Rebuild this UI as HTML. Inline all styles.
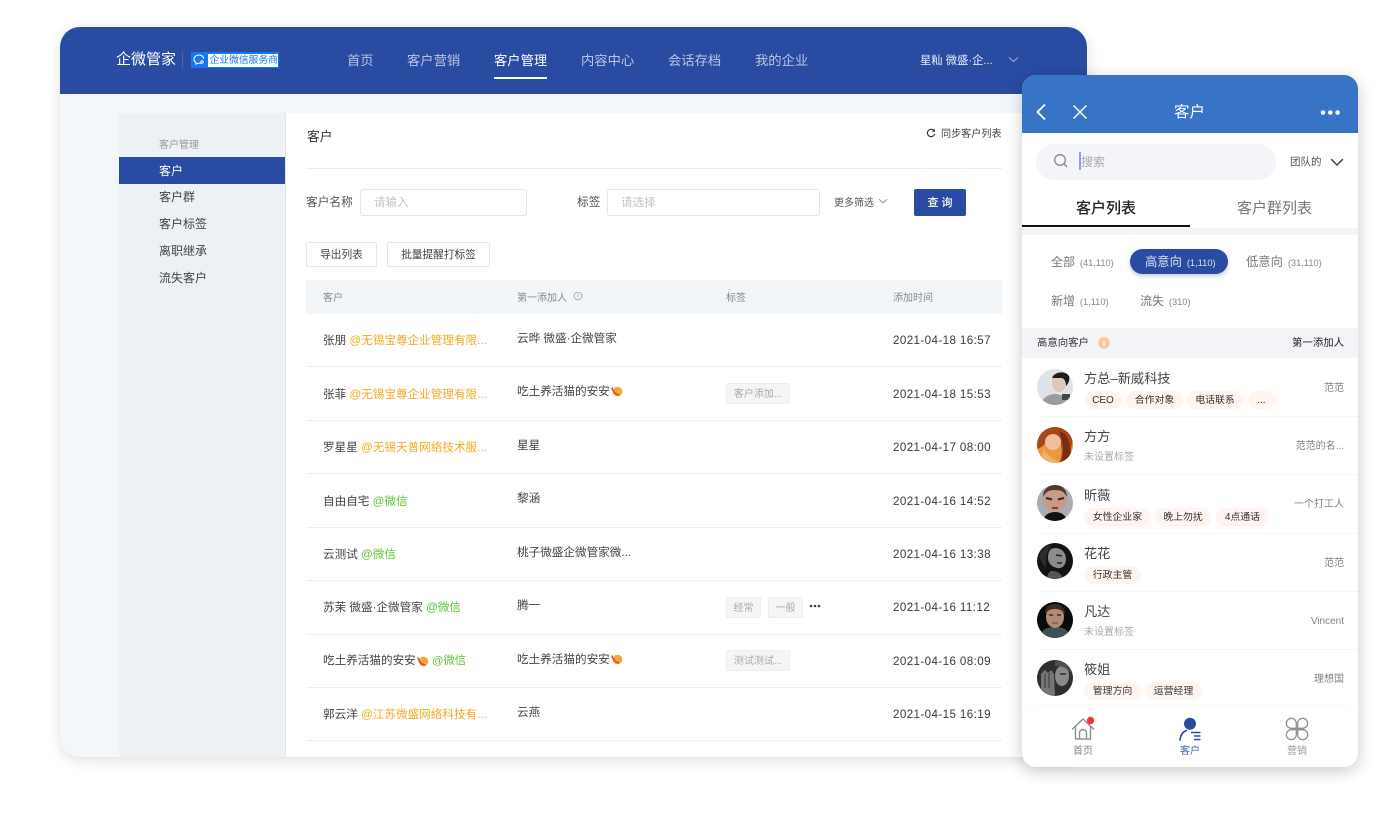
<!DOCTYPE html>
<html lang="zh"><head><meta charset="utf-8"><title>企微管家</title>
<style>
html,body{margin:0;padding:0;background:#fff}
body{width:1400px;height:816px;position:relative;overflow:hidden;font-family:"Liberation Sans","Noto Sans CJK SC",sans-serif;color:#333;-webkit-font-smoothing:antialiased}
.a,.t,.tag,.ptag,svg.a{position:absolute}
.t{white-space:nowrap;line-height:20px;height:20px}
.card{position:absolute;left:60px;top:27px;width:1027px;height:730px;background:#f4f7fa;border-radius:20px;overflow:hidden;box-shadow:0 3px 14px rgba(0,0,0,.13)}
.phone{position:absolute;left:1022px;top:75px;width:336px;height:692px;background:#fff;border-radius:14px;overflow:hidden;box-shadow:0 4px 16px rgba(0,0,0,.22)}
.shell{position:absolute;left:0;top:0;width:1400px;height:816px}
.line{position:absolute;left:306px;width:696px;height:1px;background:#ebeef3}
.name{left:323px;font-size:11.6px;color:#444}
.o{color:#f8a823}.g{color:#5fc437}
.first{left:517px;font-size:11.6px;color:#444}
.date{left:893px;font-size:11.6px;letter-spacing:.4px;color:#3a3a3a}
.tag{height:19px;line-height:21px;background:#f5f5f5;border:1px solid #ededed;border-radius:2px;font-size:10px;color:#aaa;text-align:center;box-sizing:content-box}
.input{position:absolute;height:25px;border:1px solid #e3e6ec;border-radius:3px;background:#fff}
.btn{position:absolute;height:23px;line-height:25px;border:1px solid #e3e6ec;border-radius:2px;background:#fff;font-size:10.7px;color:#444;text-align:center}
.ptag{height:17.5px;line-height:20px;background:#fff5f0;border-radius:9px;font-size:9.9px;color:#333;text-align:center}
.av{position:absolute;left:15px;width:36px;height:36px;border-radius:50%;overflow:hidden}
.sep{position:absolute;left:15px;right:0;height:1px;background:#f6f6f7}
.pn{left:62px;font-size:13.2px;color:#444}
.pr{right:14px;font-size:10px;color:#808080}
.ps{left:62px;font-size:10px;color:#aaa}
.side{left:159px;font-size:12px;color:#444}
.nav{font-size:13.3px;color:#b9c5e2}
.sm{font-size:10px;color:#888}
.n{font-size:9.3px;margin-left:1.5px;color:#888}
</style></head><body>
<div class="card"></div>
<div class="shell" style="clip-path:inset(27px 313px 59px 60px round 20px)">
<!-- header -->
<div class="a" style="left:60px;top:27px;width:1027px;height:67px;background:#2a4ba2"></div>
<div class="t" style="left:116px;top:50px;font-size:15px;color:#fff">企微管家</div>
<div class="a" style="left:182px;top:52px;width:1px;height:16px;background:#4c68b0"></div>
<div class="a" style="left:191px;top:52px;width:88px;height:16px;background:#1677f0"></div>
<div class="a" style="left:208px;top:54px;width:70px;height:13px;background:#fff"></div>
<svg class="a" style="left:192px;top:53px" width="15" height="14" viewBox="0 0 15 14"><path d="M7 2C4 2 2 4 2 6.3c0 1.4.8 2.500 2 3.300L4 11l1.800-.8c.8.200 2 .200 3 0" fill="none" stroke="#fff" stroke-width="1.100"/><circle cx="10" cy="9" r="1.200" fill="none" stroke="#fff"/><path d="M7 2c2.500 0 4.500 1.600 4.800 3.700" fill="none" stroke="#fff" stroke-width="1.100"/></svg>
<div class="t" style="left:209.500px;top:51px;font-size:9.800px;color:#1677f0">企业微信服务商</div>
<div class="t nav" style="left:347px;top:51px">首页</div>
<div class="t nav" style="left:407px;top:51px">客户营销</div>
<div class="t nav" style="left:494px;top:51px;color:#fff">客户管理</div>
<div class="a" style="left:494px;top:77px;width:53px;height:1.500px;background:#fff"></div>
<div class="t nav" style="left:581px;top:51px">内容中心</div>
<div class="t nav" style="left:668px;top:51px">会话存档</div>
<div class="t nav" style="left:755px;top:51px">我的企业</div>
<div class="t" style="left:920px;top:51px;font-size:11.300px;color:#e9edf6">星籼 微盛·企...</div>
<svg class="a" style="left:1008px;top:56px" width="11" height="8" viewBox="0 0 11 8"><path d="M1 1.500l4.500 4 4.500-4" fill="none" stroke="#a9b7da" stroke-width="1"/></svg>
<!-- sidebar -->
<div class="a" style="left:119px;top:113px;width:166px;height:644px;background:#edf0f4"></div>
<div class="a" style="left:285px;top:113px;width:1px;height:644px;background:#dfe3ea"></div>
<div class="a" style="left:286px;top:113px;width:760px;height:644px;background:#fff"></div>
<div class="t" style="left:159px;top:135.500px;font-size:10px;color:#999">客户管理</div>
<div class="a" style="left:119px;top:157px;width:166px;height:27px;background:#2a4ba2"></div>
<div class="t side" style="top:161px;color:#fff">客户</div>
<div class="t side" style="top:187px">客户群</div>
<div class="t side" style="top:214px">客户标签</div>
<div class="t side" style="top:241px">离职继承</div>
<div class="t side" style="top:268px">流失客户</div>
<!-- main top -->
<div class="t" style="left:307px;top:127px;font-size:12.800px;color:#333">客户</div>
<svg class="a" style="left:926px;top:128px" width="10" height="10" viewBox="0 0 10 10"><path d="M8.300 3A3.700 3.700 0 1 0 8.700 6" fill="none" stroke="#333" stroke-width="1.100"/><path d="M9 .8v3H6z" fill="#333"/></svg>
<div class="t" style="left:941px;top:124.500px;font-size:10.100px;color:#444">同步客户列表</div>
<div class="a" style="left:306px;top:168px;width:696px;height:1px;background:#e9ecf2"></div>
<div class="t" style="left:306px;top:193px;font-size:11.700px;color:#555">客户名称</div>
<div class="input" style="left:360px;top:189px;width:165px"></div>
<div class="t" style="left:374px;top:193px;font-size:11.500px;color:#c0c3cb">请输入</div>
<div class="t" style="left:577px;top:193px;font-size:11.700px;color:#555">标签</div>
<div class="input" style="left:607px;top:189px;width:211px"></div>
<div class="t" style="left:621px;top:193px;font-size:11.500px;color:#c0c3cb">请选择</div>
<div class="t" style="left:834px;top:193.500px;font-size:10px;color:#555">更多筛选</div>
<svg class="a" style="left:878px;top:198px" width="10" height="7" viewBox="0 0 10 7"><path d="M1 1.200l4 3.600 4-3.600" fill="none" stroke="#999" stroke-width="1"/></svg>
<div class="a" style="left:914px;top:189px;width:52px;height:27px;line-height:29px;background:#2a4ba2;border-radius:2px;color:#fff;font-size:11px;text-align:center;font-weight:500">查 询</div>
<div class="btn" style="left:306px;top:242px;width:69px">导出列表</div>
<div class="btn" style="left:387px;top:242px;width:101px">批量提醒打标签</div>
<!-- table -->
<div class="a" style="left:306px;top:280px;width:696px;height:34px;background:#f3f6f9"></div>
<div class="t sm" style="left:323px;top:288.500px">客户</div>
<div class="t sm" style="left:517px;top:288.500px">第一添加人</div>
<svg class="a" style="left:573px;top:291px" width="10" height="10" viewBox="0 0 10 10"><circle cx="5" cy="5" r="3.900" fill="none" stroke="#999" stroke-width=".8"/><path d="M5 2.700v3M5 6.500v.8" stroke="#999" stroke-width=".8"/></svg>
<div class="t sm" style="left:726px;top:288.500px">标签</div>
<div class="t sm" style="left:893px;top:288.500px">添加时间</div>
<div class="line" style="top:366px"></div><div class="line" style="top:420px"></div><div class="line" style="top:473px"></div><div class="line" style="top:527px"></div><div class="line" style="top:580px"></div><div class="line" style="top:634px"></div><div class="line" style="top:687px"></div><div class="line" style="top:740px"></div>

<div class="t name" style="top:331px">张朋 <span class="o">@无锡宝尊企业管理有限...</span></div>
<div class="t first" style="top:329px">云晔 微盛·企微管家</div>
<div class="t date" style="top:331px">2021-04-18 16:57</div>

<div class="t name" style="top:385px">张菲 <span class="o">@无锡宝尊企业管理有限...</span></div>
<div class="t first" style="top:382px">吃土养活猫的安安</div>
<svg class="a" style="left:611px;top:386px" width="12" height="11" viewBox="0 0 12 11"><circle cx="6.500" cy="5.500" r="4.800" fill="#f5a33b"/><path d="M1 1.500C2 6 4 8.500 8 9" fill="none" stroke="#e8492f" stroke-width="1.600"/></svg>
<div class="tag" style="left:726px;top:383px;width:62px">客户添加...</div>
<div class="t date" style="top:385px">2021-04-18 15:53</div>

<div class="t name" style="top:438px">罗星星 <span class="o">@无锡天普网络技术服...</span></div>
<div class="t first" style="top:436px">星星</div>
<div class="t date" style="top:438px">2021-04-17 08:00</div>

<div class="t name" style="top:492px">自由自宅 <span class="g">@微信</span></div>
<div class="t first" style="top:489px">黎涵</div>
<div class="t date" style="top:492px">2021-04-16 14:52</div>

<div class="t name" style="top:545px">云测试 <span class="g">@微信</span></div>
<div class="t first" style="top:543px">桃子微盛企微管家微...</div>
<div class="t date" style="top:545px">2021-04-16 13:38</div>

<div class="t name" style="top:598px">苏茉 微盛·企微管家 <span class="g">@微信</span></div>
<div class="t first" style="top:596px">腾一</div>
<div class="tag" style="left:726px;top:597px;width:33px">经常</div>
<div class="tag" style="left:768px;top:597px;width:33px">一般</div>
<svg class="a" style="left:809px;top:604px" width="12" height="4" viewBox="0 0 12 4"><circle cx="2" cy="2" r="1.300" fill="#444"/><circle cx="6" cy="2" r="1.300" fill="#444"/><circle cx="10" cy="2" r="1.300" fill="#444"/></svg>
<div class="t date" style="top:598px">2021-04-16 11:12</div>

<div class="t name" style="top:651px">吃土养活猫的安安</div>
<svg class="a" style="left:417px;top:656px" width="12" height="11" viewBox="0 0 12 11"><circle cx="6.500" cy="5.500" r="4.800" fill="#f5a33b"/><path d="M1 1.500C2 6 4 8.500 8 9" fill="none" stroke="#e8492f" stroke-width="1.600"/></svg>
<div class="t name" style="left:432px;top:651px"><span class="g" style="font-size:11.300px">@微信</span></div>
<div class="t first" style="top:650px">吃土养活猫的安安</div>
<svg class="a" style="left:611px;top:654px" width="12" height="11" viewBox="0 0 12 11"><circle cx="6.500" cy="5.500" r="4.800" fill="#f5a33b"/><path d="M1 1.500C2 6 4 8.500 8 9" fill="none" stroke="#e8492f" stroke-width="1.600"/></svg>
<div class="tag" style="left:726px;top:650px;width:62px">测试测试...</div>
<div class="t date" style="top:652px">2021-04-16 08:09</div>

<div class="t name" style="top:705px">郭云洋 <span class="o">@江苏微盛网络科技有...</span></div>
<div class="t first" style="top:703px">云燕</div>
<div class="t date" style="top:705px">2021-04-15 16:19</div>
</div>

<!-- phone -->
<div class="phone">
<div class="a" style="left:0;top:0;width:336px;height:58px;background:#3874c6"></div>
<svg class="a" style="left:13px;top:27px" width="14" height="20" viewBox="0 0 14 20"><path d="M10 2.500L2.500 10l7.500 7.500" fill="none" stroke="#fff" stroke-width="1.800"/></svg>
<svg class="a" style="left:50px;top:29px" width="16" height="16" viewBox="0 0 16 16"><path d="M1.500 1.500l13 13M14.500 1.500l-13 13" fill="none" stroke="#fff" stroke-width="1.500"/></svg>
<div class="t" style="left:152px;top:28px;font-size:15.500px;color:#fff">客户</div>
<svg class="a" style="left:298px;top:33.500px" width="21" height="7" viewBox="0 0 21 7"><circle cx="3" cy="3.500" r="2.300" fill="#fff"/><circle cx="10.300" cy="3.500" r="2.300" fill="#fff"/><circle cx="17.600" cy="3.500" r="2.300" fill="#fff"/></svg>
<div class="a" style="left:14px;top:69px;width:240px;height:36px;background:#f3f5f9;border-radius:18px"></div>
<svg class="a" style="left:31px;top:78px" width="16" height="16" viewBox="0 0 16 16"><circle cx="7" cy="7" r="5.300" fill="none" stroke="#888" stroke-width="1.300"/><path d="M11 11l3 3" stroke="#888" stroke-width="1.300"/></svg>
<div class="a" style="left:57px;top:77px;width:1.500px;height:18px;background:#8ca3d8"></div>
<div class="t" style="left:59px;top:76.500px;font-size:12px;color:#aaa">搜索</div>
<div class="t" style="left:268px;top:77px;font-size:10.500px;color:#555">团队的</div>
<svg class="a" style="left:307.500px;top:82.500px" width="14" height="9" viewBox="0 0 14 9"><path d="M1.200 1.200L7 7l5.800-5.800" fill="none" stroke="#444" stroke-width="1.500"/></svg>
<div class="t" style="left:54px;top:124px;font-size:15px;color:#222;font-weight:500">客户列表</div>
<div class="t" style="left:215px;top:124px;font-size:15px;color:#777">客户群列表</div>
<div class="a" style="left:0;top:150px;width:168px;height:1.500px;background:#111"></div>
<div class="a" style="left:0;top:153px;width:336px;height:7px;background:#f3f4f8"></div>

<div class="t" style="left:29px;top:177px;font-size:12px;color:#777">全部 <span class="n">(41,110)</span></div>
<div class="a" style="left:108px;top:174px;width:98px;height:25px;background:#2a4ba2;border-radius:13px;box-shadow:0 2px 5px rgba(42,75,162,.3)"></div>
<div class="t" style="left:123px;top:177px;font-size:12.300px;color:#d8e0f2">高意向 <span class="n" style="color:#d8e0f2">(1,110)</span></div>
<div class="t" style="left:224px;top:177px;font-size:12.300px;color:#777">低意向 <span class="n">(31,110)</span></div>
<div class="t" style="left:29px;top:216px;font-size:12px;color:#777">新增 <span class="n">(1,110)</span></div>
<div class="t" style="left:118px;top:216px;font-size:12px;color:#777">流失 <span class="n">(310)</span></div>

<div class="a" style="left:0;top:253px;width:336px;height:30px;background:#f3f4f8"></div>
<div class="t" style="left:15px;top:259px;font-size:10.400px;color:#333">高意向客户</div>
<svg class="a" style="left:76px;top:262px" width="12" height="12" viewBox="0 0 12 12"><circle cx="6" cy="6" r="5.800" fill="#f8c8a0"/><path d="M6 3v.9M6 5v4" stroke="#fff" stroke-width="1.200"/></svg>
<div class="t" style="right:14px;top:259px;font-size:10.400px;color:#222">第一添加人</div>

<!-- rows -->
<div class="av" style="top:294px"><svg width="36" height="36" viewBox="0 0 36 36"><rect width="36" height="36" fill="#dfe2e6"/><path d="M4 36c1-8 9-11 14-11s12 3 14 11z" fill="#9b9c9e"/><ellipse cx="22" cy="14" rx="7" ry="9" fill="#e2c7b8"/><path d="M15 9c2-6 13-8 17-2 1 3 0 7-3 10 0-5-2-8-5-8-4 0-6 0-9 0z" fill="#1d1c1e"/><rect x="25" y="25" width="8" height="6" fill="#44464a"/></svg></div>
<div class="t pn" style="top:294px">方总–新威科技</div>
<div class="ptag" style="left:62px;top:316px;width:38px;font-size:10px">CEO</div>
<div class="ptag" style="left:104px;top:316px;width:57px">合作对象</div>
<div class="ptag" style="left:165px;top:316px;width:56px">电话联系</div>
<div class="ptag" style="left:226px;top:316px;width:27px">...</div>
<div class="t pr" style="top:304px">范范</div>
<div class="sep" style="top:341px"></div>

<div class="av" style="top:352px"><svg width="36" height="36" viewBox="0 0 36 36"><rect width="36" height="36" fill="#e89a3c"/><path d="M0 0h36v14c-4 10 0 22-6 22H22C28 24 24 8 14 9 10 12 8 20 0 22z" fill="#a8481a"/><ellipse cx="16" cy="15" rx="8" ry="8" fill="#f0bfa0"/><path d="M22 4c8 2 14 12 10 32h-8c4-10 2-22-2-32z" fill="#7a2d10"/><path d="M6 22c4 6 10 10 16 14H4z" fill="#efb070"/></svg></div>
<div class="t pn" style="top:352px">方方</div>
<div class="t ps" style="top:372.500px">未设置标签</div>
<div class="t pr" style="top:362px">范范的名...</div>
<div class="sep" style="top:399px"></div>

<div class="av" style="top:410px"><svg width="36" height="36" viewBox="0 0 36 36"><rect width="36" height="36" fill="#a5adb5"/><ellipse cx="18" cy="13" rx="12" ry="14" fill="#c99a85"/><path d="M6 12c0-8 6-12 12-12s12 4 12 12c-3-5-5-7-12-7S9 7 6 12z" fill="#4a3a32"/><path d="M9 13l6 1.500M21 14.500l6-1.500" stroke="#2a2a30" stroke-width="2"/><path d="M15 23h6" stroke="#7b4038" stroke-width="2"/><path d="M6 36c1-6 6-9 12-9s11 3 12 9z" fill="#111"/></svg></div>
<div class="t pn" style="top:411px">昕薇</div>
<div class="ptag" style="left:62px;top:433px;width:67px">女性企业家</div>
<div class="ptag" style="left:133px;top:433px;width:56px">晚上勿扰</div>
<div class="ptag" style="left:194px;top:433px;width:53px">4点通话</div>
<div class="t pr" style="top:420px">一个打工人</div>
<div class="sep" style="top:458px"></div>

<div class="av" style="top:468px"><svg width="36" height="36" viewBox="0 0 36 36"><rect width="36" height="36" fill="#131313"/><path d="M14 6c8-3 15 2 15 10 0 7-5 10-9 9-5-1-9-5-9-10 0-4 1-7 3-9z" fill="#8c8c8c"/><path d="M14 28c5 0 10 1 12 8H10c0-4 2-7 4-8z" fill="#555"/><path d="M19 12l6 1M20 20l5 0" stroke="#222" stroke-width="1.500"/><path d="M2 14c2-8 8-12 12-12-3 6-6 10-5 24z" fill="#2c2c2c"/></svg></div>
<div class="t pn" style="top:469px">花花</div>
<div class="ptag" style="left:62px;top:491px;width:57px">行政主管</div>
<div class="t pr" style="top:479px">范范</div>
<div class="sep" style="top:516px"></div>

<div class="av" style="top:527px"><svg width="36" height="36" viewBox="0 0 36 36"><rect width="36" height="36" fill="#0a0a0a"/><path d="M3 36c1-8 6-11 15-11s14 3 15 11z" fill="#3f5050"/><ellipse cx="18" cy="15" rx="9" ry="11" fill="#b08a72"/><path d="M8 12C8 4 13 2 18 2s10 3 10 10c-3-4-6-5-10-5s-7 1-10 5z" fill="#3a2a1f"/><path d="M12 13h4M20 13h4" stroke="#382a22" stroke-width="1.500"/><path d="M15 21h6" stroke="#7a5040" stroke-width="1.200"/></svg></div>
<div class="t pn" style="top:527px">凡达</div>
<div class="t ps" style="top:547.500px">未设置标签</div>
<div class="t pr" style="top:536.500px">Vincent</div>
<div class="sep" style="top:574px"></div>

<div class="av" style="top:585px"><svg width="36" height="36" viewBox="0 0 36 36"><rect width="36" height="36" fill="#2e2e2e"/><path d="M4 36V14l4-4 3 3 3-3 3 4 1 22z" fill="#757575"/><ellipse cx="25" cy="16" rx="7" ry="10" fill="#8a8a8a"/><path d="M18 0c10 0 15 5 16 14-4-6-8-8-16-8z" fill="#4f4f4f"/><path d="M8 14v14M12 13v15" stroke="#3c3c3c" stroke-width="1"/><path d="M23 14h6" stroke="#2e2e2e" stroke-width="1.600"/></svg></div>
<div class="t pn" style="top:585px">筱姐</div>
<div class="ptag" style="left:62px;top:607px;width:57px">管理方向</div>
<div class="ptag" style="left:123px;top:607px;width:57px">运营经理</div>
<div class="t pr" style="top:595px">理想国</div>

<!-- tabbar -->
<div class="a" style="left:0;top:633px;width:336px;height:59px;background:#fff;border-radius:14px 14px 0 0;box-shadow:0 -1px 4px rgba(0,0,0,.03)"></div>
<svg class="a" style="left:48px;top:641px" width="26" height="26" viewBox="0 0 26 26"><path d="M2.500 13L13 3l10.500 10M5.500 11v12h15V11" fill="none" stroke="#8f8f8f" stroke-width="1.400" stroke-linejoin="round" stroke-linecap="round"/><path d="M9.500 23v-6a3.500 3.500 0 0 1 7 0v6" fill="none" stroke="#8f8f8f" stroke-width="1.400"/><circle cx="20.500" cy="4.500" r="3.700" fill="#f5333f"/></svg>
<div class="t" style="left:51px;top:667px;font-size:10px;color:#888">首页</div>
<svg class="a" style="left:156px;top:642px" width="26" height="26" viewBox="0 0 26 26"><circle cx="12" cy="6.800" r="6" fill="#2a4ba2"/><path d="M2 23c.4-4.500 2.500-8 6.500-9.500" fill="none" stroke="#2a4ba2" stroke-width="1.600" stroke-linecap="round"/><path d="M13 15.500h9.500M16 19h6.500M16 22.500h6.500" stroke="#2a4ba2" stroke-width="1.500"/></svg>
<div class="t" style="left:158px;top:667px;font-size:10px;color:#3a5cb0">客户</div>
<svg class="a" style="left:263px;top:642px" width="24" height="24" viewBox="0 0 24 24"><path d="M11.300 11.300H6a5 5 0 1 1 5.300-5.300zM12.700 11.300H18a5 5 0 1 0-5.300-5.300zM11.300 12.700H6a5 5 0 1 0 5.300 5.300zM12.700 12.700H18a5 5 0 1 1-5.300 5.300z" fill="none" stroke="#8f8f8f" stroke-width="1.300"/></svg>
<div class="t" style="left:265px;top:667px;font-size:10px;color:#999">营销</div>
</div>
</body></html>
